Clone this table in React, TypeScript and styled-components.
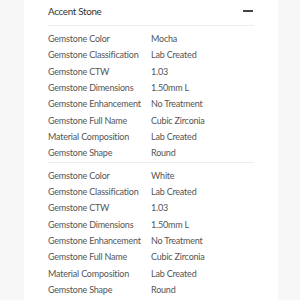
import React from "react";
import styled, { createGlobalStyle } from "styled-components";

const Global = createGlobalStyle`
  html, body { margin: 0; padding: 0; background: #f7f7f7; }
  body { font-family: Lato, "Open Sans", sans-serif; }
`;

const Card = styled.section`
  margin-left: 24px;
  width: 254px;
  min-height: 300px;
  background: #ffffff;
  padding: 0 24px;
  box-sizing: border-box;
`;

const Header = styled.div`
  display: flex;
  align-items: center;
  justify-content: space-between;
  height: 22px;
  padding-bottom: 3px;
  border-bottom: 1px solid #ececec;
`;

const Title = styled.h3`
  margin: 0;
  font-size: 9.8px;
  letter-spacing: -0.3px;
  font-weight: 400;
  color: #333333;
`;

const Minus = styled.span`
  display: block;
  width: 10px;
  height: 1.5px;
  background: #444444;
  margin-right: 1px;
`;

const Group = styled.div`
  padding-top: 5px;
  border-bottom: 1px solid #ececec;
  &:last-child { border-bottom: none; }
`;

const Row = styled.div`
  display: grid;
  grid-template-columns: 103px 1fr;
  line-height: 16.33px;
  font-size: 9px;
  letter-spacing: -0.2px;
  color: #555555;
`;

const Cell = styled.span`
  white-space: nowrap;
`;

type Spec = [string, string];

const groups: Spec[][] = [
  [
    ["Gemstone Color", "Mocha"],
    ["Gemstone Classification", "Lab Created"],
    ["Gemstone CTW", "1.03"],
    ["Gemstone Dimensions", "1.50mm L"],
    ["Gemstone Enhancement", "No Treatment"],
    ["Gemstone Full Name", "Cubic Zirconia"],
    ["Material Composition", "Lab Created"],
    ["Gemstone Shape", "Round"],
  ],
  [
    ["Gemstone Color", "White"],
    ["Gemstone Classification", "Lab Created"],
    ["Gemstone CTW", "1.03"],
    ["Gemstone Dimensions", "1.50mm L"],
    ["Gemstone Enhancement", "No Treatment"],
    ["Gemstone Full Name", "Cubic Zirconia"],
    ["Material Composition", "Lab Created"],
    ["Gemstone Shape", "Round"],
  ],
];

export default function App() {
  return (
    <>
      <Global />
      <Card>
        <Header>
          <Title>Accent Stone</Title>
          <Minus />
        </Header>
        {groups.map((g, i) => (
          <Group key={i}>
            {g.map(([k, v], j) => (
              <Row key={j}>
                <Cell>{k}</Cell>
                <Cell>{v}</Cell>
              </Row>
            ))}
          </Group>
        ))}
      </Card>
    </>
  );
}
